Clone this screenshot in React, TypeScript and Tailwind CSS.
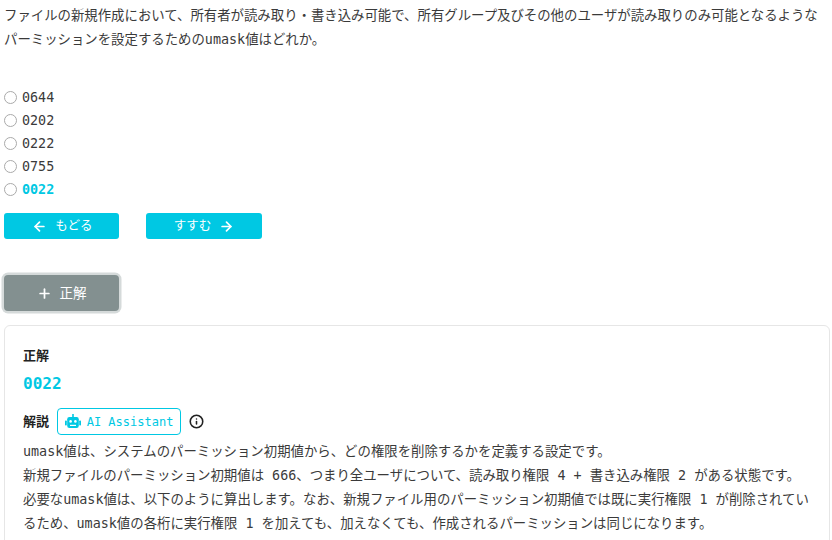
import { ArrowLeft, ArrowRight, Plus, Info } from 'lucide-react';

const choices = ['0644', '0202', '0222', '0755', '0022'];
const font = "font-['DejaVu_Sans_Mono','Noto_Sans_CJK_JP',monospace]";

function BotIcon() {
  return (
    <svg width="16" height="15" viewBox="0 0 16 15" fill="#00c8e3">
      <rect x="7.2" y="0" width="1.6" height="3.5" />
      <rect x="2.2" y="3" width="11.6" height="11" rx="2.2" />
      <rect x="0" y="6.5" width="1.8" height="5" rx="0.7" />
      <rect x="14.2" y="6.5" width="1.8" height="5" rx="0.7" />
      <circle cx="5.6" cy="7.4" r="1.3" fill="#fff" />
      <circle cx="10.4" cy="7.4" r="1.3" fill="#fff" />
      <rect x="5" y="10.8" width="6" height="1.2" fill="#fff" />
    </svg>
  );
}

export default function App() {
  return (
    <div className={`w-[832px] h-[540px] overflow-hidden bg-white text-[#3a3a3a] text-[13.4px] ${font}`}>
      <p className="px-1 pt-[2px] leading-[24px] font-['Noto_Sans_CJK_JP',sans-serif]">
        ファイルの新規作成において、所有者が読み取り・書き込み可能で、所有グループ及びその他のユーザが読み取りのみ可能となるような
        <br />
        パーミッションを設定するための<span className={font}>umask</span>値はどれか。
      </p>

      <div className="mt-[35px] px-1">
        {choices.map((c, i) => (
          <label key={c} className="flex items-center h-[23px] gap-[5px]">
            <span className="w-[13px] h-[13px] mb-[2px] rounded-full border border-[#aaa] bg-white" />
            <span className={i === 4 ? 'text-[#00c8e3] font-bold' : ''}>{c}</span>
          </label>
        ))}
      </div>

      <div className="mt-[11px] px-1 flex gap-[27px]">
        <button className="w-[115px] h-[26px] pl-[2px] rounded-[3px] bg-[#00c8e3] text-white flex items-center justify-center gap-[8px] text-[12.5px]">
          <ArrowLeft size={15} strokeWidth={2.75} />
          もどる
        </button>
        <button className="w-[116px] h-[26px] rounded-[3px] bg-[#00c8e3] text-white flex items-center justify-center gap-[8px] text-[12.5px]">
          すすむ
          <ArrowRight size={15} strokeWidth={2.75} />
        </button>
      </div>

      <div className="mt-[36px] ml-1">
        <button className="w-[115px] h-[36px] rounded-[4px] bg-[#839090] text-white flex items-center justify-center gap-2 text-[13.5px] ring-[2.5px] ring-[#d5dada]">
          <Plus size={15} strokeWidth={2.75} />
          正解
        </button>
      </div>

      <div className="ml-1 mt-[14px] w-[826px] h-[300px] rounded-[6px] border border-[#e6e6e6] px-[18px] pt-[20px]">
        <div className="font-bold text-[#222] text-[13px] leading-[20px]">正解</div>
        <div className="mt-[6px] text-[#00c8e3] text-[16px] font-bold leading-[24px]">0022</div>
        <div className="mt-[12px] flex items-center">
          <span className="font-bold text-[#222] text-[13px]">解説</span>
          <span className="ml-[8px] w-[124px] h-[27px] rounded-[4px] border border-[#00c8e3] text-[#00c8e3] text-[12px] flex items-center justify-center gap-[6px]">
            <BotIcon />
            AI Assistant
          </span>
          <Info size={15} strokeWidth={2.5} className="ml-2 text-[#222]" />
        </div>
        <div className="mt-[5px] leading-[24px] whitespace-nowrap">
          <div>umask値は、システムのパーミッション初期値から、どの権限を削除するかを定義する設定です。</div>
          <div>新規ファイルのパーミッション初期値は 666、つまり全ユーザについて、読み取り権限 4 + 書き込み権限 2 がある状態です。</div>
          <div>必要なumask値は、以下のように算出します。なお、新規ファイル用のパーミッション初期値では既に実行権限 1 が削除されてい</div>
          <div>るため、umask値の各桁に実行権限 1 を加えても、加えなくても、作成されるパーミッションは同じになります。</div>
        </div>
      </div>
    </div>
  );
}
